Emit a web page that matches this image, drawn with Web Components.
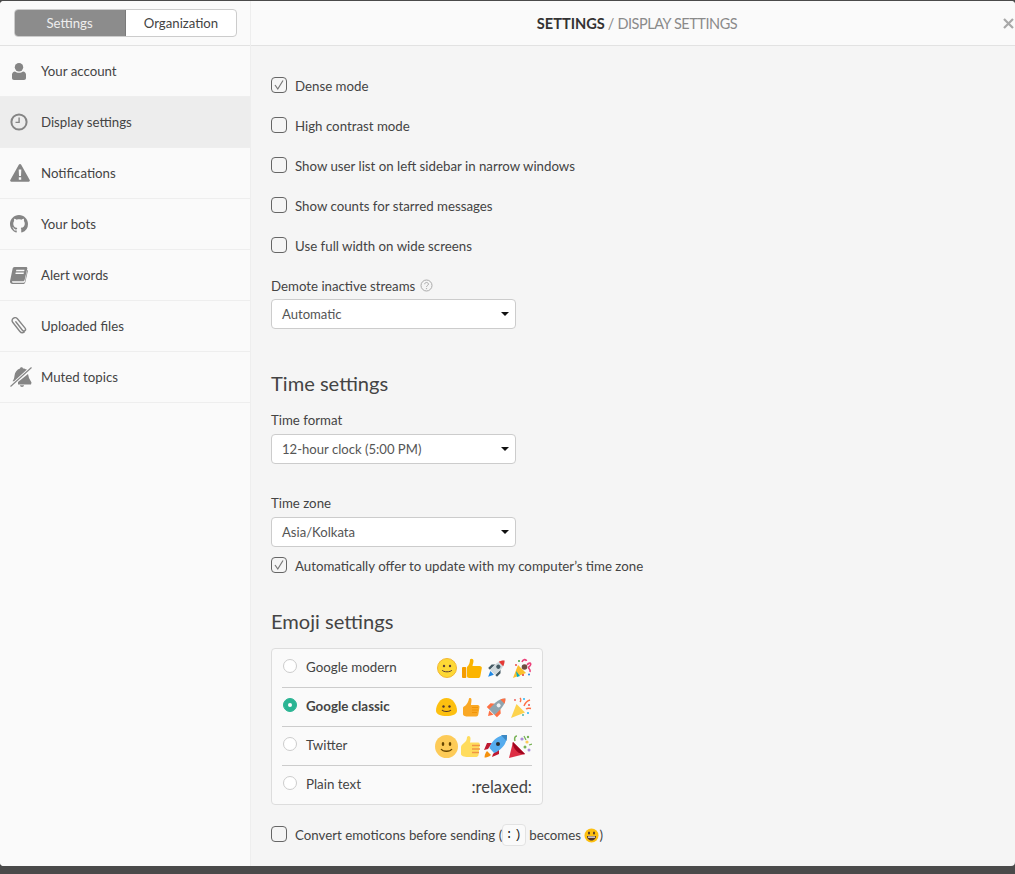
<!DOCTYPE html>
<html>
<head>
<meta charset="utf-8">
<style>
  html, body { margin: 0; height: 100%; background: #4a4a4a; overflow: hidden; }
  body { font-family: "Lato", "Liberation Sans", sans-serif; color: #333; }
</style>
</head>
<body>
<settings-app>
  <settings-sidebar slot="sidebar">
    <nav-row icon="user">Your account</nav-row>
    <nav-row icon="clock" active>Display settings</nav-row>
    <nav-row icon="warn">Notifications</nav-row>
    <nav-row icon="github">Your bots</nav-row>
    <nav-row icon="book">Alert words</nav-row>
    <nav-row icon="clip">Uploaded files</nav-row>
    <nav-row icon="bell">Muted topics</nav-row>
  </settings-sidebar>
  <check-row checked>Dense mode</check-row>
  <check-row>High contrast mode</check-row>
  <check-row>Show user list on left sidebar in narrow windows</check-row>
  <check-row>Show counts for starred messages</check-row>
  <check-row>Use full width on wide screens</check-row>
  <select-field style="margin-top:1px" value="Automatic" help>Demote inactive streams</select-field>
  <section-title style="margin-top:41px">Time settings</section-title>
  <select-field style="margin-top:12px;--gap:6px" value="12-hour clock (5:00 PM)">Time format</select-field>
  <select-field style="margin-top:29px;--gap:6px" value="Asia/Kolkata">Time zone</select-field>
  <check-row checked style="margin-top:8px">Automatically offer to update with my computer’s time zone</check-row>
  <section-title style="margin-top:13px">Emoji settings</section-title>
  <emoji-box style="margin-top:12px">
    <emoji-option emoji="a">Google modern</emoji-option>
    <emoji-option emoji="b" selected>Google classic</emoji-option>
    <emoji-option emoji="c">Twitter</emoji-option>
    <emoji-option plain>Plain text</emoji-option>
  </emoji-box>
  <check-row style="margin-top:19px">Convert emoticons before sending (<key-cap>:)</key-cap>becomes <smile-icon></smile-icon>)</check-row>
</settings-app>

<script>
const ICONS = {
  user: `<svg width="14" height="17" viewBox="0 0 14 17"><circle cx="7" cy="4.200" r="4.200"/><path d="M0 15V11.500C0 9.800 1.300 8.400 3 8.400c1 .8 2.500 1.300 4 1.300s3-.5 4-1.300c1.700 0 3 1.400 3 3.100V15c0 1.200-.8 2-2 2H2c-1.200 0-2-.8-2-2z"/></svg>`,
  clock: `<svg width="18" height="18" viewBox="0 0 18 18"><circle cx="9" cy="9" r="7.600" fill="none" stroke="currentColor" stroke-width="2"/><path d="M9.800 4.500v5.600H5.500V8.800h2.900V4.500z"/></svg>`,
  warn: `<svg width="20" height="18" viewBox="0 0 20 18"><path fill-rule="evenodd" d="M10 0c.5 0 .9.300 1.200.7l8.500 15.300c.4.800-.1 1.700-1 1.700H1.300c-.9 0-1.400-.9-1-1.700L8.800.7C9.100.3 9.500 0 10 0zM8.700 5.500l.3 6.500h2l.3-6.500zM8.800 13.300v2.400h2.400v-2.400z"/></svg>`,
  github: `<svg width="18" height="18" viewBox="0 0 16 16"><path d="M8 0C3.580 0 0 3.580 0 8c0 3.540 2.290 6.530 5.470 7.590.4.070.55-.17.55-.38 0-.19-.01-.82-.01-1.490-2.010.37-2.530-.49-2.690-.94-.09-.23-.48-.94-.82-1.130-.28-.15-.68-.52-.01-.53.63-.01 1.080.58 1.230.82.720 1.210 1.870.87 2.330.66.070-.52.280-.87.510-1.070-1.780-.2-3.640-.89-3.640-3.950 0-.87.310-1.590.82-2.150-.08-.2-.36-1.020.08-2.120 0 0 .67-.21 2.200.82.640-.18 1.320-.27 2-.27s1.360.09 2 .27c1.530-1.040 2.200-.82 2.200-.82.440 1.100.160 1.920.080 2.120.510.560.820 1.270.820 2.150 0 3.070-1.870 3.750-3.650 3.950.290.250.540.730.540 1.480 0 1.070-.010 1.930-.010 2.200 0 .21.150.46.550.38A8.010 8.010 0 0016 8c0-4.420-3.580-8-8-8z"/></svg>`,
  book: `<svg width="18" height="17" viewBox="0 0 18 17"><path fill-rule="evenodd" d="M4.500 0H16c.9 0 1.500.6 1.300 1.500L14.600 13c-.2.900-.9 1.300-1.700 1.300H3c-1 0-1.200.6-.9 1 .2.300.6.400 1 .4h10.500c.6 0 1-.3 1.200-.8L17.300 3l.7.4-2.700 11.800c-.3 1.100-1 1.800-2.200 1.800H2.500C1 17 0 16 0 14.500c0-.4.100-.8.200-1.200L2.600 1.800C2.800.700 3.500 0 4.500 0zM6.300 2.800L6 4.200h8.200l.3-1.400zM5.700 5.600l-.3 1.400h8.200l.3-1.400z"/></svg>`,
  clip: `<svg width="16" height="18" viewBox="0 0 16 18"><path fill="none" stroke="currentColor" stroke-width="1.400" stroke-linecap="round" stroke-linejoin="round" d="M4.800 4.800l6.600 8.400c.7.900 1.800 1 2.500.4.800-.6.800-1.700.2-2.500L6.400 1.800C5.400.6 3.700.4 2.300 1.300 1 2.300.7 4 1.700 5.300l7 8.900c1.100 1.400 3 1.900 4.400 1"/></svg>`,
  bell: `<svg width="22" height="20" viewBox="0 0 22 20"><path d="M21.500.5L.5 19.500" stroke="currentColor" stroke-width="1.100" fill="none"/><path d="M17 2.600L4 14.300H2.500c1.300-1.500 1.800-3.300 2-5.500.3-3.400 2.500-6.300 5.500-7.300.2-.8.700-1.300 1.500-1.300s1.300.5 1.500 1.200c1.600 0 3 .7 4 1.500z"/><path d="M18 7l1 4 2.500 4.500-.5 2H8V15zM10 18.300h4c0 1-.9 1.700-2 1.700s-2-.7-2-1.700z"/></svg>`,
};

const EMOJI = {
  a: [
    `<circle cx="10" cy="10" r="9.500" fill="#fdd835" stroke="#f2b632"/><circle cx="7" cy="8" r="1.200" fill="#5d4037"/><circle cx="13" cy="8" r="1.200" fill="#5d4037"/><path d="M5 12c1.200 2.400 8.800 2.400 10 0" fill="none" stroke="#5d4037"/>`,
    `<path d="M8 1.500c1-1.500 3.500-1 3.500 1.200 0 2-.8 3.500-1 5.300h7c1.500 0 2.500 1 2.300 2.200l-1.500 8c-.2 1-1 1.800-2 1.800H7.500c-2 0-2.500-1-2.500-2V9c2-2 3-4 3-7.500z" fill="#fbb400"/><rect y="9" width="4.300" height="11" rx="1" fill="#f59c00"/>`,
    `<g transform="rotate(45 10 10) translate(10 10) scale(1.250) translate(-10 -10)"><path d="M5 15v-4l2-2v6zM15 15v-4l-2-2v6z" fill="#455a64"/><path d="M10 1.500c2.600 2.500 3.500 6 3 13.500H7c-.5-7.500.4-11 3-13.500z" fill="#cfd8dc"/><path d="M10 1.500c1.200 1.100 2 2.500 2.500 4h-5c.5-1.500 1.300-2.900 2.500-4z" fill="#e53935"/><circle cx="10" cy="8.500" r="1.700" fill="#455a64"/><path d="M8 15.500h4l-2 4.500z" fill="#1e88e5"/></g>`,
    `<path d="M1 20l5-13 8 8z" fill="#fbc02d"/><path d="M4 13l4 5-3 1z" fill="#00acc1"/><circle cx="12.500" cy="9" r="2.800" fill="#6d4c41"/><path d="M10 4c1-3 4-3 4.500-1M15 7c2-3 4.500-2 3.500 0s-3 2-1.500 3.500 1.500 2 1 3.500" fill="none" stroke="#ec407a" stroke-width="1.600"/><circle cx="7" cy="3" r="1" fill="#43a047"/><circle cx="4" cy="7" r=".9" fill="#e53935"/><circle cx="17" cy="16.500" r="1" fill="#1e88e5"/><circle cx="11" cy="17" r="1" fill="#e53935"/>`,
  ],
  b: [
    `<path d="M10.500 1c6 0 10.500 6.500 10.500 12.500 0 4-4.500 5.500-10.500 5.500S0 17.500 0 13.500C0 7.500 4.500 1 10.500 1z" fill="#fdc010"/><circle cx="7.500" cy="9.500" r="1.200" fill="#4e342e"/><circle cx="13.500" cy="9.500" r="1.200" fill="#4e342e"/><path d="M6 13c1.500 2 7.500 2 9 0" fill="none" stroke="#4e342e" stroke-width="1.100"/>`,
    `<path d="M8 1.500c1-1 2.500-.5 2.500 1.500 0 2-.5 3.500-.5 5h6.500c1.500 0 2 1 2 2l-1.200 7.500c-.2 1-1 2-2 2H7c-2 0-5-.5-5-2.500V11c0-1 1-2 2-2 2-2 3.500-4 4-7.500z" fill="#f9a825"/><path d="M11 10.500h6M11 13h6M11 15.500h5" stroke="#ef8f00" stroke-width=".8"/>`,
    `<g transform="rotate(45 10.500 10.500) translate(10.500 10.500) scale(1.200) translate(-10.500 -10.500)"><path d="M4.500 16v-4.500l3-2.500v7zM16.500 16v-4.500l-3-2.500v7z" fill="#ff7043"/><path d="M10.500 0c2.900 2.800 4 7 3.300 16H7.200c-.7-9 .4-13.200 3.300-16z" fill="#90a4ae"/><path d="M10.500 0c1.200 1.100 2 2.300 2.500 3.500H8c.5-1.200 1.300-2.400 2.500-3.500z" fill="#ff7043"/><circle cx="10.500" cy="8" r="1.700" fill="#eceff1"/><path d="M8 16.500h5l-2.500 4z" fill="#ff7043"/></g>`,
    `<path d="M0 21l5.500-14 8.500 8.500z" fill="#fdd34e"/><path d="M9 5c1-1 1-3 0-4M13 9c1-3 3-5 6-6M15 12c1.500-1 3-1 5-.5" fill="none" stroke="#ff7043" stroke-width="1.400"/><circle cx="13" cy="2" r="1" fill="#29b6f6"/><circle cx="18" cy="8" r="1" fill="#ef5350"/><circle cx="17" cy="16" r="1" fill="#29b6f6"/><circle cx="12" cy="18" r="1" fill="#4db6ac"/><circle cx="4" cy="3" r=".9" fill="#ef5350"/>`,
  ],
  c: [
    `<circle cx="11.500" cy="11.500" r="11.500" fill="#fdcb58"/><ellipse cx="8" cy="9" rx="1.300" ry="1.900" fill="#664500"/><ellipse cx="15" cy="9" rx="1.300" ry="1.900" fill="#664500"/><path d="M6 14c2 3 9 3 11 0" fill="none" stroke="#664500" stroke-width="1.300"/>`,
    `<path d="M7 2c1.500-2 3.500-1 3.500 1.500 0 2-.5 3-.5 4h8c2 0 2 2 1.500 3l-1 9.500c-.3 1.500-1.500 2-3 2H8c-4 0-7-1-7-3v-7c0-2 2-3 3-4 2-1.500 3-3.500 3-6z" fill="#ffdc5d"/><path d="M12 10.500h8M12 14h8M12 17.500h7" stroke="#ef9645" stroke-width="1.400"/>`,
    `<path d="M4 14l-4 1 3-7h5zM9 19l-1 3 7-3v-6z" fill="#be1931"/><path d="M23 0c-7 0-12 3-16 9-1 2-1.500 4-1.500 4L10 18s2-.5 4-2c6-4 9-9 9-16z" fill="#55acee"/><path d="M17 0c2 0 4 0 6 0 0 2 0 4-.5 6z" fill="#3b88c3"/><circle cx="14" cy="9" r="2" fill="#292f33"/><path d="M3 16c-2 2-2.500 5-2.500 6.500C2 22.500 5 22 7 20z" fill="#f4900c"/>`,
    `<path d="M0 23l4-16 12 12z" fill="#dd2e44"/><path d="M4 7l12 12c-1.500 1-6.500-1-8.500-3S2.500 8.500 4 7z" fill="#a0041e"/><path d="M6 6c-1-3 0-5 2-5" fill="none" stroke="#77b255" stroke-width="1.500"/><circle cx="13" cy="4" r="1.600" fill="#aa8dd8"/><circle cx="18" cy="7" r="1.600" fill="#fdcb58"/><circle cx="16" cy="12" r="1.500" fill="#77b255"/><circle cx="20" cy="15" r="1.500" fill="#aa8dd8"/><circle cx="19" cy="2" r="1.200" fill="#77b255"/><path d="M15 1l2 4M20 10l3-1" stroke="#77b255" stroke-width="1.300"/>`,
  ],
};

class SettingsApp extends HTMLElement {
  constructor() {
    super();
    this.attachShadow({ mode: "open" }).innerHTML = `
      <style>
        :host { display: block; position: relative; width: 1015px; height: 865px; margin-top: 1px; background: #f5f5f5; box-sizing: border-box; border-radius: 4px; overflow: hidden; }
        .shell { display: grid; grid-template-columns: 251px 1fr; height: 100%; }
        aside { background: #fafafa; border-right: 1px solid #eee; box-sizing: border-box; display: flex; flex-direction: column; }
        .tabs { height: 45px; flex: none; box-sizing: border-box; border-bottom: 1px solid #e2e2e2; padding: 8px 13px 0 14px; }
        .seg { display: grid; grid-template-columns: 111px 1fr; height: 28px; border: 1px solid #ccc; border-radius: 4px; overflow: hidden; box-sizing: border-box; background: #fff; font-size: 13.200px; }
        .seg div { display: flex; align-items: center; justify-content: center; color: #444; padding-bottom: 1px; }
        .seg .on { background: #8c8c8c; color: #eee; margin: -1px 0 -1px -1px; border-right: 1px solid #7a7a7a; }
        main { display: flex; flex-direction: column; min-width: 0; }
        header { height: 45px; flex: none; box-sizing: border-box; background: #fafafa; border-bottom: 1px solid #e2e2e2; display: flex; align-items: center; justify-content: center; font-size: 14.500px; color: #8a8a8a; position: relative; padding-left: 8px; }
        header b { color: #333; font-weight: 700; font-size: 14.600px; margin-right: 3px; }
        header span { margin-left: 3px; letter-spacing: -.45px; }
        .close { position: absolute; right: 1px; top: 15px; color: #a8a8a8; }
        .content { padding: 29px 0 0 20px; display: flex; flex-direction: column; }
      </style>
      <div class="shell">
        <aside>
          <div class="tabs"><div class="seg"><div class="on">Settings</div><div>Organization</div></div></div>
          <slot name="sidebar"></slot>
        </aside>
        <main>
          <header><b>SETTINGS</b> / <span>DISPLAY SETTINGS</span>
            <svg class="close" width="11" height="15" viewBox="0 0 11 15"><path d="M1 3l9 9M10 3l-9 9" stroke="currentColor" stroke-width="2.200" fill="none"/></svg>
          </header>
          <div class="content"><slot></slot></div>
        </main>
      </div>`;
  }
}

class SettingsSidebar extends HTMLElement {
  constructor() {
    super();
    this.attachShadow({ mode: "open" }).innerHTML = `
      <style>:host { display: block; }</style><slot></slot>`;
  }
}

// left edge of each sidebar icon, they do not share one
const ICON_LEFT = { user: 12, clock: 10, warn: 10, github: 10, book: 10, clip: 11, bell: 10 };

class NavRow extends HTMLElement {
  constructor() {
    super();
    const icon = this.getAttribute("icon");
    this.attachShadow({ mode: "open" }).innerHTML = `
      <style>
        :host { display: flex; align-items: center; height: 51px; box-sizing: border-box; border-bottom: 1px solid #eee; font-size: 13.250px; color: #444; }
        :host([active]) { background: #ededed; }
        .ic { width: 41px; flex: none; display: flex; padding-left: ${ICON_LEFT[icon]}px; box-sizing: border-box; color: #858585; fill: currentColor; }
      </style>
      <span class="ic">${ICONS[icon]}</span><span><slot></slot></span>`;
  }
}

class CheckRow extends HTMLElement {
  constructor() {
    super();
    const checked = this.hasAttribute("checked");
    this.attachShadow({ mode: "open" }).innerHTML = `
      <style>
        :host { display: flex; align-items: center; height: 20px; margin-bottom: 20px; font-size: 13.270px; color: #444; }
        .box { width: 16px; height: 16px; border: 1px solid #666; border-radius: 4px; margin-right: 8px; flex: none; box-sizing: border-box; display: flex; }
        .txt { display: flex; align-items: center; white-space: pre; padding-top: 2px; }
      </style>
      <span class="box">${checked ? `<svg width="14" height="14" viewBox="0 0 14 14"><path d="M3 7l2.800 4L11 2.500" fill="none" stroke="#777" stroke-width="1.200"/></svg>` : ""}</span><span class="txt"><slot></slot></span>`;
  }
}

class SelectField extends HTMLElement {
  constructor() {
    super();
    const help = this.hasAttribute("help")
      ? `<svg class="help" width="13" height="13" viewBox="0 0 13 13"><circle cx="6.500" cy="6.500" r="5.500" fill="none" stroke="#aaa"/><path d="M4.700 5.200c0-2.300 3.700-2.300 3.700 0 0 1.400-1.900 1.400-1.900 2.700" fill="none" stroke="#aaa"/><circle cx="6.500" cy="9.600" r=".7" fill="#aaa"/></svg>`
      : "";
    this.attachShadow({ mode: "open" }).innerHTML = `
      <style>
        :host { display: block; font-size: 13.250px; color: #444; }
        .lab { display: flex; align-items: center; gap: 5px; height: 18px; margin-bottom: var(--gap, 5px); }
        .lab span { padding-top: 2px; }
        .sel { width: 245px; height: 30px; box-sizing: border-box; border: 1px solid #ccc; border-radius: 4px; background: #fff; display: flex; align-items: center; justify-content: space-between; padding: 0 6px 0 10px; color: #555; font-size: 13.100px; }
        .tri { width: 0; height: 0; border: 4px solid transparent; border-top: 4px solid #111; border-bottom: 0; }
      </style>
      <div class="lab"><span><slot></slot></span>${help}</div>
      <div class="sel"><span>${this.getAttribute("value")}</span><i class="tri"></i></div>`;
  }
}

class SectionTitle extends HTMLElement {
  constructor() {
    super();
    this.attachShadow({ mode: "open" }).innerHTML = `
      <style>:host { display: block; font-size: 20.100px; line-height: 26px; padding-bottom: 2px; color: #444; }</style><slot></slot>`;
  }
}

class EmojiBox extends HTMLElement {
  constructor() {
    super();
    this.attachShadow({ mode: "open" }).innerHTML = `
      <style>:host { display: block; width: 272px; box-sizing: border-box; border: 1px solid #ddd; border-radius: 4px; background: #fafafa; padding: 0 10px; }</style><slot></slot>`;
  }
}

class EmojiOption extends HTMLElement {
  constructor() {
    super();
    const selected = this.hasAttribute("selected");
    const plain = this.hasAttribute("plain");
    const kind = this.getAttribute("emoji");
    const size = kind === "c" ? 23 : kind === "b" ? 21 : 20;
    const gap = kind === "c" ? 1.600 : kind === "b" ? 4 : 4.900;
    const right = plain
      ? `<span class="plain">:relaxed:</span>`
      : EMOJI[kind].map((e) => `<svg width="${size}" height="${size}" viewBox="0 0 ${size} ${size}">${e}</svg>`).join("");
    this.attachShadow({ mode: "open" }).innerHTML = `
      <style>
        :host { display: flex; align-items: center; height: 39px; box-sizing: border-box; border-bottom: 1px solid #ccc; font-size: 13.350px; color: #444; }
        :host(:last-child) { border-bottom: 0; height: 38px; }
        :host([selected]) { font-weight: 700; }
        .radio { width: 14px; height: 14px; border: 1px solid #ccc; border-radius: 50%; background: #fff; margin: -5px 9px 0 1px; flex: none; box-sizing: border-box; }
        .radio.on { background: #2bb594; border-color: #2bb594; display: flex; align-items: center; justify-content: center; }
        .radio.on::after { content: ""; width: 4px; height: 4px; border-radius: 50%; background: #fff; }
        .label { flex: 1; margin-top: -2px; }
        .emo { display: flex; gap: ${gap}px; align-items: center; }
        .plain { font-size: 16.500px; margin-top: 3px; font-weight: 400; }
      </style>
      <span class="radio ${selected ? "on" : ""}"></span><span class="label"><slot></slot></span><span class="emo">${right}</span>`;
  }
}

class KeyCap extends HTMLElement {
  constructor() {
    super();
    this.attachShadow({ mode: "open" }).innerHTML = `
      <style>:host { display: inline-flex; align-items: center; justify-content: center; width: 24px; height: 22px; margin: 0 3px 0 0; box-sizing: border-box; border: 1px solid #e3e3e3; border-radius: 4px; background: #fafafa; font: 12px "Liberation Mono", monospace; letter-spacing: 1.500px; color: #222; }</style><slot></slot>`;
  }
}

class SmileIcon extends HTMLElement {
  constructor() {
    super();
    this.attachShadow({ mode: "open" }).innerHTML = `
      <style>:host { display: inline-flex; }</style>
      <svg width="15" height="15" viewBox="0 0 15 15"><circle cx="7.500" cy="7.500" r="7" fill="#fdc010"/><ellipse cx="5" cy="5" rx="1" ry="1.500" fill="#4e342e"/><ellipse cx="10" cy="5" rx="1" ry="1.500" fill="#4e342e"/><path d="M3 8h9c0 2.800-2.300 4.500-4.500 4.500S3 10.800 3 8z" fill="#4e342e"/><path d="M4 8.500h7v1.200H4z" fill="#fff"/></svg>`;
  }
}

customElements.define("settings-app", SettingsApp);
customElements.define("settings-sidebar", SettingsSidebar);
customElements.define("nav-row", NavRow);
customElements.define("check-row", CheckRow);
customElements.define("select-field", SelectField);
customElements.define("section-title", SectionTitle);
customElements.define("emoji-box", EmojiBox);
customElements.define("emoji-option", EmojiOption);
customElements.define("key-cap", KeyCap);
customElements.define("smile-icon", SmileIcon);
</script>
</body>
</html>
